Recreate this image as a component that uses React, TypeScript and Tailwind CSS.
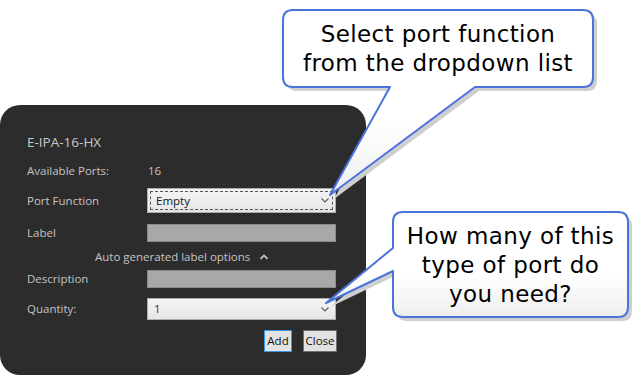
import React from "react";

const ui = { fontFamily: '"Open Sans", "Noto Sans", sans-serif' };
const vd = { fontFamily: '"DejaVu Sans", Verdana, sans-serif' };

function Chevron({ color = "#606060" }: { color?: string }) {
  return (
    <svg width="8" height="5" viewBox="0 0 8 5" className="shrink-0">
      <path d="M0.5 0.5 L4 4 L7.5 0.5" fill="none" stroke={color} strokeWidth="1.2" />
    </svg>
  );
}

function Callouts() {
  const p1 =
    "M293 10 H583 Q593 10 593 20 V77 Q593 87 583 87 H475 L330 195 L390 87 H293 Q283 87 283 77 V20 Q283 10 293 10 Z";
  const p2 =
    "M403 212 H618 Q628 212 628 222 V307 Q628 317 618 317 H403 Q393 317 393 307 V271 L326 303 L393 248 V222 Q393 212 403 212 Z";
  return (
    <svg className="absolute left-0 top-0" width="642" height="379" viewBox="0 0 642 379">
      <defs>
        <linearGradient id="g1" x1="0" y1="0" x2="0" y2="1">
          <stop offset="0" stopColor="#ffffff" />
          <stop offset="0.6" stopColor="#ffffff" />
          <stop offset="1" stopColor="#eeeeee" />
        </linearGradient>
      </defs>
      <path d={p1} transform="translate(4,4)" fill="#cfcfcf" />
      <path d={p2} transform="translate(4,4)" fill="#cfcfcf" />
      <path d={p1} fill="url(#g1)" stroke="#4a74dc" strokeWidth="2" strokeLinejoin="round" />
      <path d={p2} fill="url(#g1)" stroke="#4a74dc" strokeWidth="2" strokeLinejoin="round" />
    </svg>
  );
}

export default function App() {
  return (
    <div className="relative w-[642px] h-[379px] bg-white overflow-hidden">
      <div className="pt-[105px]">
        <div
          className="w-[366px] h-[270px] rounded-[20px] bg-[#2c2c2c] pl-[27px] pt-[27px] text-[#c4c4c4]"
          style={ui}
        >
          <div className="h-[20px] leading-[20px] text-[13.5px] text-[#c8c8c8]">E-IPA-16-HX</div>

          <div className="mt-[9px] flex h-[20px] items-center text-[11.5px]">
            <div className="w-[121px]">Available Ports:</div>
            <div>16</div>
          </div>

          <div className="mt-[7px] flex items-center text-[11.5px]">
            <div className="w-[120px]">Port Function</div>
            <div className="h-[25px] w-[189px] border border-[#adadad] bg-gradient-to-b from-[#f4f4f4] to-[#e6e6e6] p-[2px]">
              <div className="flex h-full items-center justify-between border border-dashed border-[#555] pl-[5px] pr-[3px] text-[#151515]">
                <span>Empty</span>
                <Chevron />
              </div>
            </div>
          </div>

          <div className="mt-[11px] flex items-center text-[11.5px]">
            <div className="w-[120px]">Label</div>
            <div className="h-[18px] w-[189px] border border-[#8a8a8a] bg-[#a8a8a8]" />
          </div>

          <div className="mt-[7px] flex h-[16px] items-center text-[11.5px]">
            <div className="ml-[68px]">Auto generated label options</div>
            <svg width="8" height="6" viewBox="0 0 8 6" className="ml-[10px]">
              <path d="M0.5 5 L4 1.5 L7.5 5" fill="none" stroke="#d0d0d0" strokeWidth="1.6" />
            </svg>
          </div>

          <div className="mt-[5px] flex items-center text-[11.5px]">
            <div className="w-[120px]">Description</div>
            <div className="h-[18px] w-[189px] border border-[#8a8a8a] bg-[#a8a8a8]" />
          </div>

          <div className="mt-[10px] flex items-center text-[11.5px]">
            <div className="w-[120px]">Quantity:</div>
            <div className="flex h-[22px] w-[189px] items-center justify-between border border-[#adadad] bg-gradient-to-b from-[#f4f4f4] to-[#e6e6e6] pl-[6px] pr-[6px]">
              <span className="text-[#7a1020]">1</span>
              <Chevron />
            </div>
          </div>

          <div className="mt-[10px] flex w-[310px] justify-end gap-[11px] text-[11.5px] text-[#111]">
            <div className="flex h-[22px] w-[28px] items-center justify-center border border-[#3d95e6] bg-[#e3e3e3]">
              Add
            </div>
            <div className="flex h-[22px] w-[34px] items-center justify-center border border-[#707070] bg-[#e1e1e1]">
              Close
            </div>
          </div>
        </div>
      </div>

      <Callouts />

      <div
        className="absolute left-[283px] top-[20px] w-[310px] text-center text-[23px] leading-[29px] tracking-[0.4px] text-black"
        style={vd}
      >
        Select port function
        <br />
        from the dropdown list
      </div>
      <div
        className="absolute left-[393px] top-[222px] w-[235px] text-center text-[23px] leading-[29px] tracking-[0.4px] text-black"
        style={vd}
      >
        How many of this
        <br />
        type of port do
        <br />
        you need?
      </div>
    </div>
  );
}
